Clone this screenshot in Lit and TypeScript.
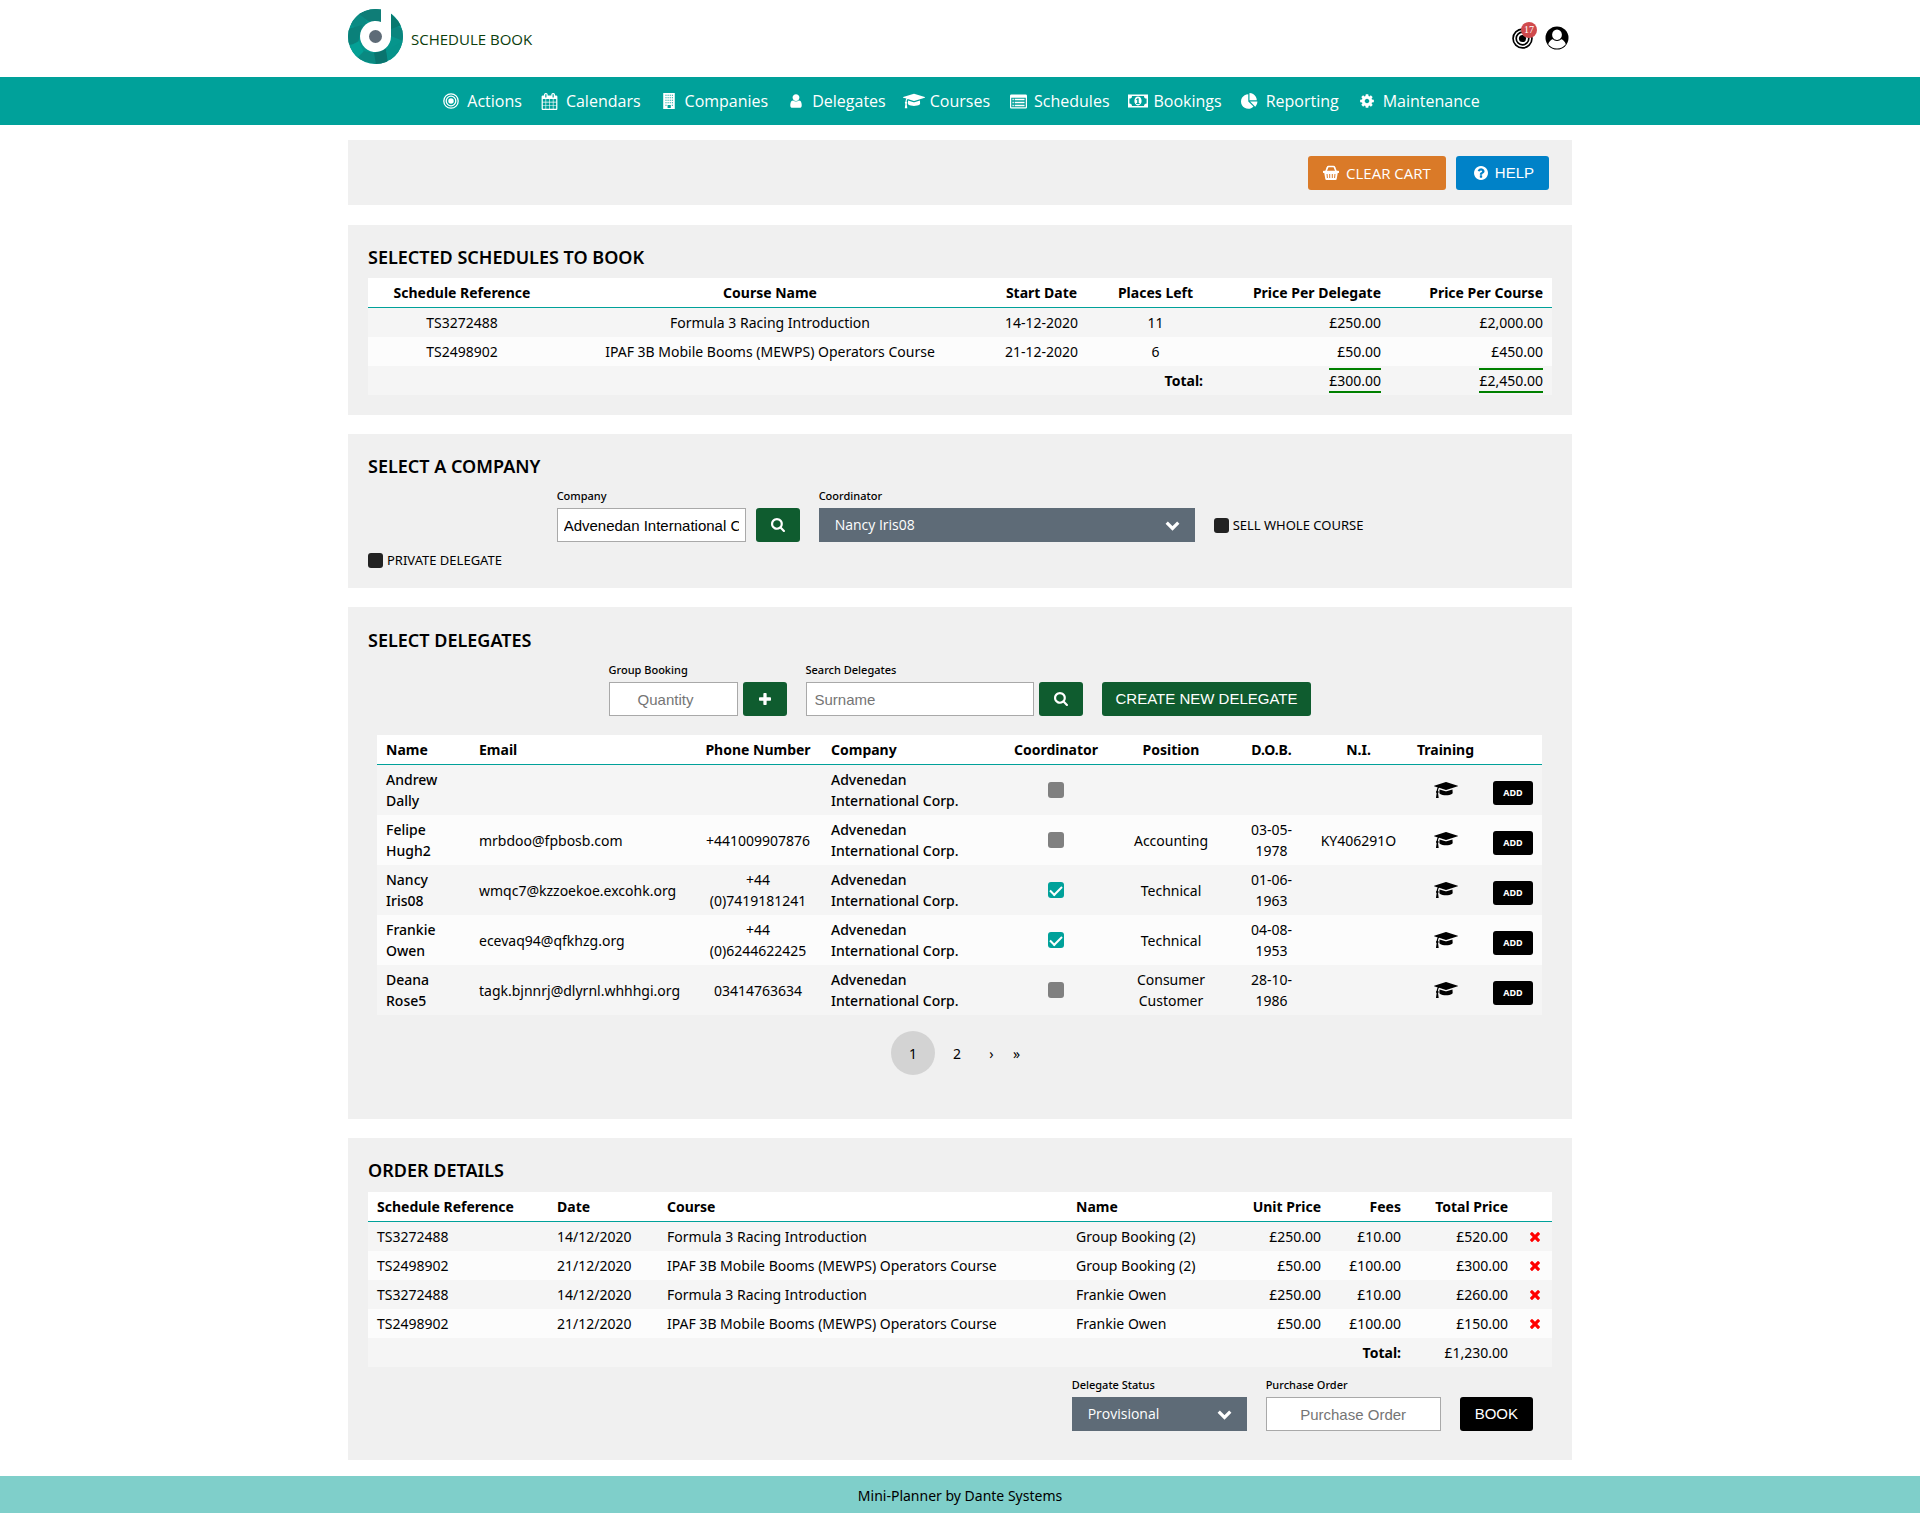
import { LitElement, html, svg, css, nothing } from "lit";
import { customElement, state } from "lit/decorators.js";

const icons: Record<string, { box: string; art: unknown }> = {
  target: {
    box: "0 0 20 20",
    art: svg`<g fill="none" stroke="currentColor"><circle cx="10" cy="10" r="9" stroke-width="1.6"/><circle cx="10" cy="10" r="6" stroke-width="1.6"/></g><circle cx="10" cy="10" r="3.4" fill="currentColor"/>`,
  },
  calendar: {
    box: "0 0 1792 1792",
    art: svg`<path d="M192 1664h288v-288h-288v288zm352 0h320v-288h-320v288zm-352-352h288v-320h-288v320zm352 0h320v-320h-320v320zm-352-384h288v-288h-288v288zm736 736h320v-288h-320v288zm-384-736h320v-288h-320v288zm768 736h288v-288h-288v288zm-384-352h320v-320h-320v320zm-352-864v-288q0-13-9.500-22.500t-22.500-9.500h-64q-13 0-22.500 9.500t-9.500 22.500v288q0 13 9.500 22.500t22.500 9.500h64q13 0 22.500-9.500t9.500-22.500zm736 864h288v-320h-288v320zm-384-384h320v-288h-320v288zm384 0h288v-288h-288v288zm32-480v-288q0-13-9.500-22.500t-22.500-9.500h-64q-13 0-22.500 9.500t-9.500 22.500v288q0 13 9.500 22.500t22.500 9.500h64q13 0 22.500-9.500t9.500-22.500zm384-64v1280q0 52-38 90t-90 38h-1408q-52 0-90-38t-38-90v-1280q0-52 38-90t90-38h128v-96q0-66 47-113t113-47h64q66 0 113 47t47 113v96h384v-96q0-66 47-113t113-47h64q66 0 113 47t47 113v96h128q52 0 90 38t38 90z"/>`,
  },
  building: {
    box: "0 0 16 18",
    art: svg`<path fill-rule="evenodd" d="M1.500 0h13v18h-13zM4 2v1.200h1.200V2zM6.400 2v1.200h1.200V2zM8.800 2v1.200H10V2zM11.200 2v1.200h1.200V2zM4 4.800V6h1.200V4.800zM6.400 4.800V6h1.200V4.800zM8.800 4.800V6H10V4.800zM11.200 4.800V6h1.200V4.800zM4 7.600v1.200h1.200V7.600zM6.400 7.600v1.200h1.200V7.600zM8.800 7.600v1.200H10V7.600zM11.200 7.600v1.200h1.200V7.600zM4 10.400v1.200h1.200v-1.200zM6.400 10.400v1.200h1.200v-1.200zM8.800 10.400v1.200H10v-1.200zM11.200 10.400v1.200h1.200v-1.200zM4 13.200v1.200h1.200v-1.200zM11.200 13.200v1.200h1.200v-1.200zM6.400 13.400v3.400H10v-3.400z"/>`,
  },
  user: {
    box: "0 0 1792 1792",
    art: svg`<path d="M1536 1399q0 109-62.500 187t-150.500 78h-854q-88 0-150.500-78t-62.500-187q0-85 8.500-160.500t31.500-152 58.500-131 94-89 134.500-34.500q131 128 313 128t313-128q76 0 134.500 34.500t94 89 58.500 131 31.500 152 8.500 160.500zm-256-887q0 159-112.500 271.500t-271.500 112.500-271.500-112.500-112.500-271.500 112.500-271.500 271.500-112.500 271.500 112.500 112.500 271.500z"/>`,
  },
  cap: {
    box: "0 64 2304 1664",
    art: svg`<path d="M1774 836l18 316q4 69-82 128t-235 93.500-323 34.500-323-34.500-235-93.500-82-128l18-316 574 181q22 7 48 7t48-7zm530-324q0 23-22 31l-1120 352q-4 1-10 1t-10-1l-652-206q-43 34-71 111.500t-34 178.500q63 36 63 109 0 69-58 107l58 433q2 14-8 25-9 11-24 11h-192q-15 0-24-11-10-11-8-25l58-433q-58-38-58-107 0-73 65-111 11-207 98-330l-333-104q-22-8-22-31t22-31l1120-352q4-1 10-1t10 1l1120 352q22 8 22 31z"/>`,
  },
  list: {
    box: "0 0 18 16",
    art: svg`<path fill-rule="evenodd" d="M1.500 0.500h15a1.500 1.500 0 0 1 1.500 1.500v12a1.500 1.500 0 0 1-1.500 1.500h-15A1.500 1.500 0 0 1 0 14V2A1.500 1.500 0 0 1 1.500 0.500zM1.300 4v10.200h15.400V4z"/><path d="M2.600 5.200h1.400v1.500H2.600zM5 5.200h10.400v1.500H5zM2.600 8.300h1.400v1.500H2.600zM5 8.300h10.400v1.500H5zM2.600 11.400h1.400v1.500H2.600zM5 11.400h10.400v1.500H5z"/>`,
  },
  money: {
    box: "0 0 20 14",
    art: svg`<path fill-rule="evenodd" d="M0 .5h20v13H0zM4 2A2.600 2.600 0 0 1 1.400 4.600v4.800A2.600 2.600 0 0 1 4 12h12a2.600 2.600 0 0 1 2.600-2.600V4.600A2.600 2.600 0 0 1 16 2z"/><path fill-rule="evenodd" d="M10 2.600c2.200 0 3.600 2 3.600 4.400s-1.400 4.400-3.600 4.400S6.400 9.400 6.400 7 7.800 2.600 10 2.600zM9.500 4.200L8 5.400l.6.800.6-.4v3.100H8.200v1h3.400v-1h-.9V4.200z"/>`,
  },
  pie: {
    box: "0 0 1792 1792",
    art: svg`<path d="M768 890l546 546q-106 108-247.500 168t-298.500 60q-209 0-385.500-103t-279.500-279.500-103-385.500 103-385.500 279.500-279.500 385.500-103v762zm187 6h773q0 157-60 298.500t-168 247.500zm709-128h-768v-768q209 0 385.500 103t279.500 279.500 103 385.500z"/>`,
  },
  cog: {
    box: "0 0 1792 1792",
    art: svg`<path d="M1152 896q0-106-75-181t-181-75-181 75-75 181 75 181 181 75 181-75 75-181zm512-109v222q0 12-8 23t-20 13l-185 28q-19 54-39 91 35 50 107 138 10 12 10 25t-9 23q-27 37-99 108t-94 71q-12 0-26-9l-138-108q-44 23-91 38-16 136-29 186-7 28-36 28h-222q-14 0-24.500-8.500t-11.500-21.500l-28-184q-49-16-90-37l-141 107q-10 9-25 9-14 0-25-11-126-114-165-168-7-10-7-23 0-12 8-23 15-21 51-66.500t54-70.500q-27-50-41-99l-183-27q-13-2-21-12.500t-8-23.500v-222q0-12 8-23t19-13l186-28q14-46 39-92-40-57-107-138-10-12-10-24 0-10 9-23 26-36 98.500-107.500t94.500-71.500q13 0 26 10l138 107q44-23 91-38 16-136 29-186 7-28 36-28h222q14 0 24.500 8.500t11.500 21.500l28 184q49 16 90 37l142-107q9-9 24-9 13 0 25 10 129 119 165 170 7 8 7 22 0 12-8 23-15 21-51 66.500t-54 70.500q26 50 41 98l183 28q13 2 21 12.500t8 23.500z"/>`,
  },
  basket: {
    box: "0 0 18 17",
    art: svg`<path d="M3.200 7L5 2.200Q5.300 1.200 6.300 1.200h5.400q1 0 1.300 1L14.800 7" fill="none" stroke="currentColor" stroke-width="1.800"/><path fill-rule="evenodd" d="M1 6h16a1 1 0 0 1 0 2.600h-.4l-1.200 6.600a1.300 1.300 0 0 1-1.300 1.100H3.900a1.300 1.300 0 0 1-1.300-1.100L1.400 8.600H1A1 1 0 0 1 1 6zM4 9.600l.4 4.400h1.100L5.100 9.600zM7 9.600V14h1.100V9.600zM9.900 9.600V14H11V9.600zM12.900 9.600l-.4 4.400h1.100l.4-4.400z"/>`,
  },
  help: {
    box: "128 128 1536 1536",
    art: svg`<path d="M1024 1376v-192q0-14-9-23t-23-9h-192q-14 0-23 9t-9 23v192q0 14 9 23t23 9h192q14 0 23-9t9-23zm256-672q0-88-55.500-163t-138.500-116-170-41q-243 0-371 213-15 24 8 42l132 100q7 6 19 6 16 0 25-12 53-68 86-92 34-24 86-24 48 0 85.500 26t37.500 59q0 38-20 61t-68 45q-63 28-115.500 86.500t-52.500 125.500v36q0 14 9 23t23 9h192q14 0 23-9t9-23q0-19 21.500-49.500t54.500-49.500q32-18 49-28.500t46-35 44.500-48 28-60.500 12.500-81zm384 192q0 209-103 385.500t-279.500 279.500-385.500 103-385.500-103-279.500-279.500-103-385.500 103-385.500 279.500-279.500 385.500-103 385.500 103 279.500 279.500 103 385.500z"/>`,
  },
  search: {
    box: "64 128 1664 1664",
    art: svg`<path d="M1216 832q0-185-131.500-316.500t-316.500-131.500-316.500 131.500-131.500 316.500 131.500 316.500 316.500 131.500 316.500-131.500 131.500-316.500zm512 832q0 52-38 90t-90 38q-54 0-90-38l-343-342q-179 124-399 124-143 0-273.500-55.500t-225-150-150-225-55.500-273.500 55.500-273.500 150-225 225-150 273.500-55.500 273.500 55.500 225 150 150 225 55.500 273.500q0 220-124 399l343 343q37 37 37 90z"/>`,
  },
  plus: {
    box: "192 128 1408 1408",
    art: svg`<path d="M1600 736v192q0 40-28 68t-68 28h-416v416q0 40-28 68t-68 28h-192q-40 0-68-28t-28-68v-416h-416q-40 0-68-28t-28-68v-192q0-40 28-68t68-28h416v-416q0-40 28-68t68-28h192q40 0 68 28t28 68v416h416q40 0 68 28t28 68z"/>`,
  },
  remove: {
    box: "302 366 1188 1188",
    art: svg`<path d="M1490 1322q0 40-28 68l-136 136q-28 28-68 28t-68-28l-294-294-294 294q-28 28-68 28t-68-28l-136-136q-28-28-28-68t28-68l294-294-294-294q-28-28-28-68t28-68l136-136q28-28 68-28t68 28l294 294 294-294q28-28 68-28t68 28l136 136q28 28 28 68t-28 68l-294 294 294 294q28 28 28 68z"/>`,
  },
  chevron: {
    box: "0 0 14 14",
    art: svg`<path d="M1.600 4.300L7 9.700l5.400-5.400" fill="none" stroke="currentColor" stroke-width="3"/>`,
  },
  account: {
    box: "0 0 24 24",
    art: svg`<circle cx="12" cy="12" r="11.500"/><path d="M3.200 18.200c.8-3 3-4.700 5.300-5.200a5 5 0 0 0 7 0c2.300.5 4.500 2.200 5.300 5.200C18.600 21 15.600 22.400 12 22.400S5.400 21 3.200 18.200z" fill="#fff"/><ellipse cx="12" cy="8.800" rx="4.900" ry="5.400" fill="#fff"/><path d="M7.600 12.600a6 6 0 0 0 8.800 0" fill="none" stroke="#000" stroke-width="1"/>`,
  },
};

const icon = (name: string, cls = "") =>
  html`<svg class="icon ${cls}" viewBox=${icons[name].box} fill="currentColor" aria-hidden="true">${icons[name].art}</svg>`;

const logo = html`<svg class="logo" viewBox="0 0 55 55" aria-hidden="true">
  <defs><clipPath id="disc"><circle cx="27.500" cy="27.500" r="27.500" /></clipPath></defs>
  <g clip-path="url(#disc)">
    <rect width="55" height="55" fill="#06958c" />
    <path d="M0 12L14 0l6 18-8 6z" fill="#0b8a83" />
    <path d="M10 4L22 0h14v14L20 12z" fill="#0f7d77" />
    <path d="M0 20l14-4-4 18-10 2z" fill="#0a817a" />
    <path d="M0 38l11-6 5 12-8 6z" fill="#04a095" />
    <path d="M8 50l8-8 14 3-2 10z" fill="#0a8981" />
    <path d="M26 44l12-4 2 15H28z" fill="#0a746e" />
    <path d="M38 42l17-10v14l-12 9z" fill="#06938a" />
    <path d="M42 14l13 6v12l-12-5z" fill="#0a857e" />
    <path d="M42 4l12 12-11 4z" fill="#08796f" />
  </g>
  <path d="M33 0h10v27.500A15.500 15.500 0 1 1 33 13z" fill="#fff" />
  <circle cx="27.500" cy="27.500" r="6.500" fill="#5e6b77" />
</svg>`;

const navItems: [string, string][] = [
  ["target", "Actions"],
  ["calendar", "Calendars"],
  ["building", "Companies"],
  ["user", "Delegates"],
  ["cap", "Courses"],
  ["list", "Schedules"],
  ["money", "Bookings"],
  ["pie", "Reporting"],
  ["cog", "Maintenance"],
];

const schedules = [
  ["TS3272488", "Formula 3 Racing Introduction", "14-12-2020", "11", "£250.00", "£2,000.00"],
  ["TS2498902", "IPAF 3B Mobile Booms (MEWPS) Operators Course", "21-12-2020", "6", "£50.00", "£450.00"],
];

interface Delegate {
  name: string;
  email: string;
  phone: string;
  coordinator: boolean;
  position: string;
  dob: string;
  ni: string;
}

const delegates: Delegate[] = [
  { name: "Andrew Dally", email: "", phone: "", coordinator: false, position: "", dob: "", ni: "" },
  { name: "Felipe Hugh2", email: "mrbdoo@fpbosb.com", phone: "+441009907876", coordinator: false, position: "Accounting", dob: "03-05-1978", ni: "KY406291O" },
  { name: "Nancy Iris08", email: "wmqc7@kzzoekoe.excohk.org", phone: "+44 (0)7419181241", coordinator: true, position: "Technical", dob: "01-06-1963", ni: "" },
  { name: "Frankie Owen", email: "ecevaq94@qfkhzg.org", phone: "+44 (0)6244622425", coordinator: true, position: "Technical", dob: "04-08-1953", ni: "" },
  { name: "Deana Rose5", email: "tagk.bjnnrj@dlyrnl.whhhgi.org", phone: "03414763634", coordinator: false, position: "Consumer Customer", dob: "28-10-1986", ni: "" },
];

const orders = [
  ["TS3272488", "14/12/2020", "Formula 3 Racing Introduction", "Group Booking (2)", "£250.00", "£10.00", "£520.00"],
  ["TS2498902", "21/12/2020", "IPAF 3B Mobile Booms (MEWPS) Operators Course", "Group Booking (2)", "£50.00", "£100.00", "£300.00"],
  ["TS3272488", "14/12/2020", "Formula 3 Racing Introduction", "Frankie Owen", "£250.00", "£10.00", "£260.00"],
  ["TS2498902", "21/12/2020", "IPAF 3B Mobile Booms (MEWPS) Operators Course", "Frankie Owen", "£50.00", "£100.00", "£150.00"],
];

@customElement("app-root")
export class AppRoot extends LitElement {
  @state() private page = 1;

  static styles = css`
    :host {
      display: block;
      background: #fff;
      color: #000;
      font: 14px/21px "Noto Sans", "Open Sans", sans-serif;
    }
    * { box-sizing: border-box; }
    .icon { display: block; width: 16px; height: 16px; flex: none; }
    a { color: inherit; text-decoration: none; }
    button, input, select { font: 15px/20px "Liberation Sans", Arial, sans-serif; margin: 0; }
    button { border: 0; cursor: pointer; }

    .wrap { width: 100%; max-width: 1224px; margin: 0 auto; }
    .header { display: flex; align-items: center; justify-content: space-between; height: 77px; padding-bottom: 4px; }
    .brand { display: flex; align-items: center; gap: 8px; font-family: "Open Sans", "Noto Sans", sans-serif; font-size: 15px; color: #0b3d0b; }
    .brand-name { padding-top: 5px; }
    .logo { display: block; width: 55px; height: 55px; }
    .tools { display: flex; align-items: center; gap: 12px; padding: 3px 3px 0 0; }
    .alerts { position: relative; display: block; }
    .alerts .icon { width: 21px; height: 21px; }
    .badge {
      position: absolute; right: -4px; top: -6px; width: 16px; height: 16px; border-radius: 50%;
      background: #d04a4d; color: #fff; text-align: center; font: 10px/16px "Liberation Serif", serif;
    }
    .account .icon { width: 24px; height: 24px; }

    .nav { background: #00a19a; color: #fff; font-family: "Open Sans", "Noto Sans", sans-serif; }
    .nav-list { display: flex; justify-content: center; gap: 17px; height: 48px; margin: 0; padding: 0; list-style: none; }
    .nav-link { display: flex; align-items: center; gap: 5px; height: 48px; font-size: 16px; }
    .nav-icon { display: flex; justify-content: center; width: 22px; }
    .nav .cap { width: 22px; }
    .nav .money { width: 20px; }
    .nav .list, .nav .pie, .nav .calendar { width: 17px; height: 17px; }

    .main { display: flex; flex-direction: column; gap: 19px; padding: 15px 0 16px; }
    .panel { background: #f0f0f0; padding: 20px; }
    .toolbar { display: flex; justify-content: flex-end; gap: 10px; padding: 16px 23px 15px; margin-bottom: 1px; }
    .title { margin: 0 0 9px; font-size: 18px; line-height: 24px; font-weight: 600; }

    .btn {
      display: inline-flex; align-items: center; justify-content: center; gap: 7px;
      height: 34px; padding: 0 15px; border-radius: 3px; color: #fff; background: #0f5c2f;
    }
    .btn-square { width: 44px; padding: 0; }
    .btn-square .icon { width: 14px; height: 14px; }
    .btn-square .plus { width: 12px; height: 12px; }
    .btn-create { padding: 0 14px; }
    .btn-clear { background: #da7a28; font-family: "Open Sans", "Noto Sans", sans-serif; font-size: 15px; }
    .btn-help { background: #0082c8; padding: 0 15px 0 18px; }
    .btn-help .icon { width: 14px; height: 14px; }
    .btn-black { background: #000; }

    .table { width: 100%; border-collapse: collapse; table-layout: fixed; }
    .table th { background: #fff; font-weight: 700; white-space: nowrap; border-bottom: 1px solid #00a19a; }
    .table th, .table td { padding: 4px 9px; text-align: left; }
    .table .c { text-align: center; }
    .table .r { text-align: right; }
    .table tbody tr:nth-child(odd), .table tfoot tr { background: #f5f5f5; }
    .table tbody tr:nth-child(even) { background: #fcfcfc; }
    .strong { font-weight: 500; }
    .total-label { font-weight: 700; }
    .table .total-cell { padding-top: 2px; padding-bottom: 2px; }
    .sum { display: inline-block; border-top: 2px solid green; border-bottom: 2px solid green; vertical-align: top; }
    .mail { white-space: nowrap; }

    .w35 { width: 35px; } .w58 { width: 58px; } .w77 { width: 77px; } .w80 { width: 80px; }
    .w93 { width: 93px; } .w95 { width: 95px; } .w97 { width: 97px; } .w106 { width: 106px; }
    .w107 { width: 107px; } .w110 { width: 110px; } .w113 { width: 113px; } .w115 { width: 115px; }
    .w124 { width: 124px; } .w128 { width: 128px; } .w162 { width: 162px; } .w168 { width: 168px; }
    .w178 { width: 178px; } .w180 { width: 180px; } .w181 { width: 181px; } .w188 { width: 188px; }
    .w224 { width: 224px; } .w409 { width: 409px; } .w428 { width: 428px; }

    .form { display: flex; align-items: flex-end; justify-content: center; gap: 19px; }
    .group { display: flex; align-items: flex-end; gap: 10px; }
    .group-tight { gap: 5px; }
    .field { display: flex; flex-direction: column; gap: 3px; }
    .label { font-size: 11px; line-height: 18px; font-weight: 500; }
    .text { height: 34px; width: 189px; padding: 0 6px; border: 1px solid #a9a9a9; border-radius: 0; background: #fff; color: #000; }
    .text::placeholder { color: #757575; opacity: 1; }
    .text-qty { width: 129px; text-align: center; }
    .text-search { width: 228px; padding: 0 8px; }
    .text-po { width: 175px; text-align: center; }
    .select { display: grid; align-items: center; color: #fff; background: #5e6b77; width: 376px; height: 34px; }
    .select-small { width: 175px; }
    .select select {
      grid-area: 1 / 1; appearance: none; width: 100%; height: 34px; padding: 0 40px 0 16px; border: 0; border-radius: 0;
      background: transparent; color: inherit; font-family: "Open Sans", "Noto Sans", sans-serif; font-size: 14px;
    }
    .select .icon { grid-area: 1 / 1; justify-self: end; width: 15px; height: 15px; margin-right: 15px; pointer-events: none; }
    .check { display: flex; align-items: center; gap: 4px; font-size: 13px; line-height: 15px; }
    .check-tall { height: 34px; }
    .private { margin-top: 11px; }
    .box { appearance: none; display: grid; place-items: center; width: 15px; height: 15px; border-radius: 3px; background: #222; }
    .box-cell { width: 16px; height: 16px; margin: 0 auto; background: #808080; }
    .box:checked { background: #00a19a; }
    .box:checked::before {
      content: ""; width: 10px; height: 5px; border: solid #fff; border-width: 0 0 2px 2px; transform: translateY(-1px) rotate(-45deg);
    }
    .delegates { padding-top: 21px; }
    .delegate-table { margin: 19px 10px 0 9px; }
    .table .company { padding-right: 24px; }
    .training { display: block; width: 24px; margin: 0 auto; color: #000; }
    .training .icon { width: 24px; height: 18px; }
    .btn-add { display: block; width: 40px; height: 24px; padding: 0; border-radius: 3px; background: #000; color: #fff; font: bold 9px/24px "Noto Sans", "Open Sans", sans-serif; }
    .table .add-cell { padding-top: 9px; }
    .pager { display: flex; justify-content: center; margin: 16px 0 24px; }
    .page { min-width: 25px; height: 44px; padding: 0; border-radius: 50%; background: none; color: #000; font: inherit; }
    .page-num { width: 44px; }
    .page-on { background: #d3d3d3; }
    .remove { display: block; padding: 0; margin: 0 auto; background: none; color: #f00; }
    .remove .icon { width: 10px; height: 10px; }
    .order .title { margin-bottom: 10px; }
    .order-form { justify-content: flex-end; margin: 9px 19px 9px 0; }

    .footer { background: #7fcfca; height: 37px; line-height: 37px; padding-top: 1px; text-align: center; }
  `;

  private select(id: string, label: string, options: string[], small = false) {
    return html`<div class="field">
      <label class="label" for=${id}>${label}</label>
      <div class="select ${small ? "select-small" : ""}">
        <select id=${id}>${options.map((o) => html`<option>${o}</option>`)}</select>
        ${icon("chevron")}
      </div>
    </div>`;
  }

  private cols(widths: number[]) {
    return html`<colgroup>${widths.map((w) => html`<col class="w${w}" />`)}</colgroup>`;
  }

  private renderSchedules() {
    const align = ["c", "c", "c", "c", "r", "r"];
    const heads = ["Schedule Reference", "Course Name", "Start Date", "Places Left", "Price Per Delegate", "Price Per Course"];
    return html`<section class="panel">
      <h2 class="title">SELECTED SCHEDULES TO BOOK</h2>
      <table class="table">
        ${this.cols([188, 428, 115, 113, 178, 162])}
        <thead><tr>${heads.map((h, i) => html`<th class=${align[i]}>${h}</th>`)}</tr></thead>
        <tbody>${schedules.map((row) => html`<tr>${row.map((v, i) => html`<td class=${align[i]}>${v}</td>`)}</tr>`)}</tbody>
        <tfoot><tr>
          <td class="r total-label" colspan="4">Total:</td>
          <td class="r total-cell"><span class="sum">£300.00</span></td>
          <td class="r total-cell"><span class="sum">£2,450.00</span></td>
        </tr></tfoot>
      </table>
    </section>`;
  }

  private renderCompany() {
    return html`<section class="panel">
      <h2 class="title">SELECT A COMPANY</h2>
      <div class="form">
        <div class="group">
          <div class="field">
            <label class="label" for="company">Company</label>
            <input class="text" id="company" type="text" .value=${"Advenedan International Corp."} />
          </div>
          <button class="btn btn-square" type="button" aria-label="Search companies">${icon("search")}</button>
        </div>
        ${this.select("coordinator", "Coordinator", ["Nancy Iris08", "Frankie Owen"])}
        <label class="check check-tall"><input class="box" type="checkbox" />SELL WHOLE COURSE</label>
      </div>
      <label class="check private"><input class="box" type="checkbox" />PRIVATE DELEGATE</label>
    </section>`;
  }

  private renderDelegates() {
    return html`<section class="panel delegates">
      <h2 class="title">SELECT DELEGATES</h2>
      <div class="form">
        <div class="group group-tight">
          <div class="field">
            <label class="label" for="quantity">Group Booking</label>
            <input class="text text-qty" id="quantity" type="number" placeholder="Quantity" />
          </div>
          <button class="btn btn-square" type="button" aria-label="Add group booking">${icon("plus", "plus")}</button>
        </div>
        <div class="group group-tight">
          <div class="field">
            <label class="label" for="surname">Search Delegates</label>
            <input class="text text-search" id="surname" type="text" placeholder="Surname" />
          </div>
          <button class="btn btn-square" type="button" aria-label="Search delegates">${icon("search")}</button>
        </div>
        <button class="btn btn-create" type="button">CREATE NEW DELEGATE</button>
      </div>
      <div class="delegate-table">
        <table class="table">
          ${this.cols([93, 224, 128, 181, 106, 124, 77, 97, 77, 58])}
          <thead><tr>
            <th>Name</th><th>Email</th><th class="c">Phone Number</th><th>Company</th><th class="c">Coordinator</th>
            <th class="c">Position</th><th class="c">D.O.B.</th><th class="c">N.I.</th><th class="c">Training</th><th></th>
          </tr></thead>
          <tbody>${delegates.map((d) => html`<tr>
            <td class="strong">${d.name}</td>
            <td class="mail">${d.email}</td>
            <td class="c">${d.phone}</td>
            <td class="strong company">Advenedan International Corp.</td>
            <td><input class="box box-cell" type="checkbox" aria-label="Coordinator: ${d.name}" .checked=${d.coordinator} /></td>
            <td class="c">${d.position}</td>
            <td class="c">${d.dob}</td>
            <td class="c">${d.ni}</td>
            <td><a class="training" href="#training" aria-label="Training for ${d.name}">${icon("cap")}</a></td>
            <td class="add-cell"><button class="btn-add" type="button">ADD</button></td>
          </tr>`)}</tbody>
        </table>
      </div>
      <nav class="pager" aria-label="Pages">
        ${[1, 2].map((n) => html`<button class="page page-num ${this.page === n ? "page-on" : ""}" type="button"
          aria-current=${this.page === n ? "page" : nothing} @click=${() => (this.page = n)}>${n}</button>`)}
        <button class="page" type="button" aria-label="Next page" @click=${() => (this.page = 2)}>›</button>
        <button class="page" type="button" aria-label="Last page" @click=${() => (this.page = 2)}>»</button>
      </nav>
    </section>`;
  }

  private renderOrder() {
    const align = ["", "", "", "", "r", "r", "r"];
    const heads = ["Schedule Reference", "Date", "Course", "Name", "Unit Price", "Fees", "Total Price"];
    return html`<section class="panel order">
      <h2 class="title">ORDER DETAILS</h2>
      <table class="table">
        ${this.cols([180, 110, 409, 168, 95, 80, 107, 35])}
        <thead><tr>${heads.map((h, i) => html`<th class=${align[i]}>${h}</th>`)}<th></th></tr></thead>
        <tbody>${orders.map((row) => html`<tr>
          ${row.map((v, i) => html`<td class=${align[i]}>${v}</td>`)}
          <td><button class="remove" type="button" aria-label="Remove ${row[0]} for ${row[3]}">${icon("remove")}</button></td>
        </tr>`)}</tbody>
        <tfoot><tr>
          <td class="r total-label" colspan="6">Total:</td>
          <td class="r">£1,230.00</td>
          <td></td>
        </tr></tfoot>
      </table>
      <div class="form order-form">
        ${this.select("status", "Delegate Status", ["Provisional", "Confirmed"], true)}
        <div class="field">
          <label class="label" for="po">Purchase Order</label>
          <input class="text text-po" id="po" type="text" placeholder="Purchase Order" />
        </div>
        <button class="btn btn-black" type="button">BOOK</button>
      </div>
    </section>`;
  }

  render() {
    return html`
      <header class="wrap header">
        <a class="brand" href="#home">${logo}<span class="brand-name">SCHEDULE BOOK</span></a>
        <div class="tools">
          <a class="alerts" href="#actions" aria-label="Open actions">${icon("target")}<span class="badge">17</span></a>
          <a class="account" href="#account" aria-label="Account">${icon("account")}</a>
        </div>
      </header>
      <nav class="nav">
        <ul class="nav-list">
          ${navItems.map(([i, text]) => html`<li><a class="nav-link" href="#${text.toLowerCase()}"><span class="nav-icon">${icon(i, i)}</span>${text}</a></li>`)}
        </ul>
      </nav>
      <main class="wrap main">
        <div class="panel toolbar">
          <button class="btn btn-clear" type="button">${icon("basket")}CLEAR CART</button>
          <button class="btn btn-help" type="button">${icon("help")}HELP</button>
        </div>
        ${this.renderSchedules()} ${this.renderCompany()} ${this.renderDelegates()} ${this.renderOrder()}
      </main>
      <footer class="footer">Mini-Planner by Dante Systems</footer>
    `;
  }
}
